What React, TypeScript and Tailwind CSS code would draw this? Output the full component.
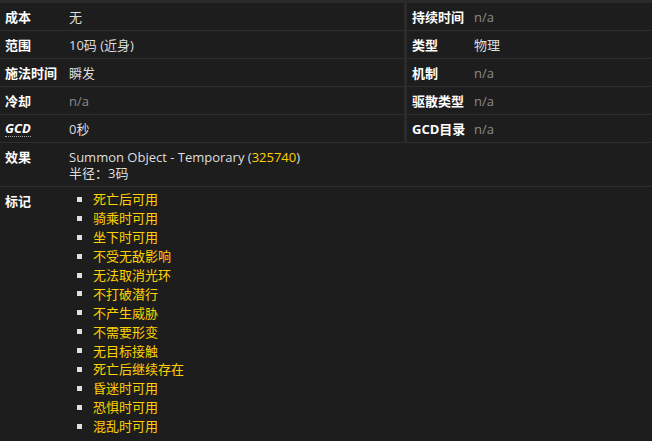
import React from "react";

type Cell = { label: React.ReactNode; value: React.ReactNode; muted?: boolean };

const leftRows: Cell[] = [
  { label: "成本", value: "无" },
  { label: "范围", value: "10码 (近身)" },
  { label: "施法时间", value: "瞬发" },
  { label: "冷却", value: "n/a", muted: true },
  {
    label: (
      <span className="italic border-b border-dotted border-[#aaa] leading-[15px] inline-block">
        GCD
      </span>
    ),
    value: "0秒",
  },
];

const rightRows: Cell[] = [
  { label: "持续时间", value: "n/a", muted: true },
  { label: "类型", value: "物理" },
  { label: "机制", value: "n/a", muted: true },
  { label: "驱散类型", value: "n/a", muted: true },
  { label: "GCD目录", value: "n/a", muted: true },
];

const flags = [
  "死亡后可用",
  "骑乘时可用",
  "坐下时可用",
  "不受无敌影响",
  "无法取消光环",
  "不打破潜行",
  "不产生威胁",
  "不需要形变",
  "无目标接触",
  "死亡后继续存在",
  "昏迷时可用",
  "恐惧时可用",
  "混乱时可用",
];

const Row = ({ cell, labelWidth }: { cell: Cell; labelWidth: string }) => (
  <div className="flex items-center h-[28px] border-b border-[#2e2e2e]">
    <div className={`${labelWidth} pl-[5px] font-bold text-white shrink-0`}>
      {cell.label}
    </div>
    <div className={cell.muted ? "text-[#8a8a8a]" : "text-[#dedede]"}>
      {cell.value}
    </div>
  </div>
);

export default function App(): React.JSX.Element {
  return (
    <div
      className="w-[652px] h-[441px] bg-[#1d1d1d] border-t-[3px] border-[#2a2a2a] text-[13px] leading-[16px] overflow-hidden"
      style={{ fontFamily: '"Open Sans", "Noto Sans CJK SC", sans-serif' }}
    >
      <div className="flex">
        <div className="w-[404px]">
          {leftRows.map((c, i) => (
            <Row key={i} cell={c} labelWidth="w-[69px]" />
          ))}
        </div>
        <div className="w-[3px] bg-[#2b2b2b]" />
        <div className="flex-1">
          {rightRows.map((c, i) => (
            <Row key={i} cell={c} labelWidth="w-[67px]" />
          ))}
        </div>
      </div>

      <div className="flex pt-[6px] pb-[5px] border-b border-[#2e2e2e]">
        <div className="w-[69px] pl-[5px] font-bold text-white shrink-0">效果</div>
        <div className="text-[#dedede]">
          <div>
            Summon Object - Temporary (
            <span className="text-[#ffd100]">325740</span>)
          </div>
          <div>半径：3码</div>
        </div>
      </div>

      <div className="flex pt-[6px]">
        <div className="w-[69px] pl-[5px] font-bold text-white shrink-0">标记</div>
        <ul className="pl-[8px] -mt-[3px]">
          {flags.map((f) => (
            <li key={f} className="flex items-center h-[18.9px]">
              <span className="w-[5px] h-[5px] bg-[#e0e0e0] mr-[11px]" />
              <span className="text-[#ffd100]">{f}</span>
            </li>
          ))}
        </ul>
      </div>
    </div>
  );
}
